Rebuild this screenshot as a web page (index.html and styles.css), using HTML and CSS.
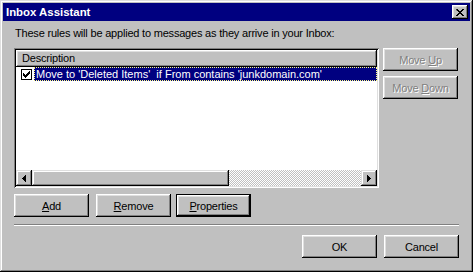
FILE: index.html
```html
<!DOCTYPE html>
<html>
<head>
<meta charset="utf-8">
<link rel="stylesheet" href="styles.css">
</head>
<body>
<div class="window">
  <div class="titlebar">
    <span class="title">Inbox Assistant</span>
    <span class="close"><svg width="8" height="7" viewBox="0 0 8 7"><path d="M0 0h2v1h1v1h2v-1h1v-1h2v1h-1v1h-1v1h-1v1h1v1h1v1h1v1h-2v-1h-1v-1h-2v1h-1v1h-2v-1h1v-1h1v-1h1v-1h-1v-1h-1z" fill="#000"/></svg></span>
  </div>
  <div class="content">
    <div class="label">These rules will be applied to messages as they arrive in your Inbox:</div>
    <div class="main">
      <div class="listbox">
        <div class="header"><span>Description</span></div>
        <div class="rows">
          <div class="row">
            <span class="check"><svg width="7" height="7" viewBox="0 0 7 7"><path d="M0 2h1v1h1v1h1v-1h1v-1h1v-1h1v-1h1v3h-1v1h-1v1h-1v1h-1v1h-1v-1h-1v-1h-1z" fill="#000"/></svg></span>
            <span class="sel"><span class="seltext">Move to 'Deleted Items'&nbsp; if From contains 'junkdomain.com'</span></span>
          </div>
        </div>
        <div class="hscroll">
          <span class="arrow"><svg width="4" height="7" viewBox="0 0 4 7"><path d="M4 0v7H3V6H2V5H1V4H0V3H1V2H2V1H3V0z" fill="#000"/></svg></span>
          <span class="thumb"></span>
          <span class="track"></span>
          <span class="arrow"><svg width="4" height="7" viewBox="0 0 4 7"><path d="M0 0v7H1V6H2V5H3V4H4V3H3V2H2V1H1V0z" fill="#000"/></svg></span>
        </div>
      </div>
      <div class="side">
        <div class="btn disabled"><span>Move <u>U</u>p</span></div>
        <div class="btn disabled"><span>Move <u>D</u>own</span></div>
      </div>
    </div>
    <div class="actions">
      <div class="btn"><span><u>A</u>dd</span></div>
      <div class="btn btn-remove"><span><u>R</u>emove</span></div>
      <div class="btn default"><span><u>P</u>roperties</span></div>
    </div>
    <div class="sep"></div>
    <div class="footer">
      <div class="btn"><span>OK</span></div>
      <div class="btn"><span>Cancel</span></div>
    </div>
  </div>
</div>
</body>
</html>
```
FILE: styles.css
```css
html,body{margin:0;padding:0;background:#c0c0c0;}
body{font-family:"Liberation Sans",Arial,sans-serif;font-size:11px;color:#000;letter-spacing:-0.2px;}
.window{width:473px;height:272px;box-sizing:border-box;padding:3px;background:#c0c0c0;
  box-shadow:inset -1px -1px #000,inset 1px 1px #dfdfdf,inset -2px -2px #808080,inset 2px 2px #fff;
  display:flex;flex-direction:column;}
.titlebar{height:18px;background:#000080;display:flex;align-items:center;justify-content:space-between;padding:0 2px 0 3px;}
.title{color:#fff;font-weight:bold;font-size:11.4px;line-height:18px;letter-spacing:0;}
.close{width:16px;height:14px;box-sizing:border-box;background:#c0c0c0;display:flex;align-items:center;justify-content:center;
  box-shadow:inset -1px -1px #000,inset 1px 1px #fff,inset -2px -2px #808080,inset 2px 2px #dfdfdf;}
.close svg{display:block;margin-left:-1px;}
.content{padding:0 11px;display:flex;flex-direction:column;}
.label{margin-top:6px;height:13px;line-height:13px;padding-left:1px;}
.main{margin-top:8px;display:flex;height:140px;}
.listbox{width:365px;height:140px;box-sizing:border-box;padding:2px;background:#fff;display:flex;flex-direction:column;
  box-shadow:inset 1px 1px #808080,inset -1px -1px #fff,inset 2px 2px #000,inset -2px -2px #dfdfdf;}
.header{height:17px;box-sizing:border-box;background:#c0c0c0;line-height:16px;padding-left:6px;
  box-shadow:inset -1px -1px #000,inset 1px 1px #fff,inset -2px -2px #808080,inset 2px 2px #dfdfdf;}
.rows{flex:1;}
.row{display:flex;align-items:center;height:14px;}
.check{width:11px;height:11px;box-sizing:border-box;margin-left:5px;background:#fff;border:1px solid #000;display:flex;align-items:center;justify-content:center;}
.check svg{display:block;}
.sel{flex:1;margin-left:2px;height:14px;background:#000080;box-sizing:border-box;border:1px dotted #ffff80;display:flex;align-items:center;}
.seltext{color:#fff;line-height:12px;padding-left:1px;white-space:nowrap;letter-spacing:0;}
.hscroll{height:16px;display:flex;}
.arrow{width:16px;height:16px;box-sizing:border-box;background:#c0c0c0;display:flex;align-items:center;justify-content:center;
  box-shadow:inset -1px -1px #000,inset 1px 1px #dfdfdf,inset -2px -2px #808080,inset 2px 2px #fff;}
.arrow svg{display:block;}
.thumb{width:197px;height:16px;box-sizing:border-box;background:#c0c0c0;
  box-shadow:inset -1px -1px #000,inset 1px 1px #dfdfdf,inset -2px -2px #808080,inset 2px 2px #fff;}
.track{flex:1;background-color:#c0c0c0;background-image:conic-gradient(#fff 25%,#c0c0c0 0 50%,#fff 0 75%,#c0c0c0 0);background-size:2px 2px;}
.side{margin-left:4px;display:flex;flex-direction:column;gap:5px;}
.btn{width:75px;height:23px;box-sizing:border-box;background:#c0c0c0;display:flex;align-items:center;justify-content:center;
  box-shadow:inset -1px -1px #000,inset 1px 1px #fff,inset -2px -2px #808080,inset 2px 2px #dfdfdf;}
.btn.disabled{color:#808080;text-shadow:1px 1px 0 #fff;}
.actions{margin-top:6px;display:flex;}
.btn-remove{margin-left:7px;}
.btn.default{margin-left:5px;border:1px solid #000;}
.sep{margin-top:7px;height:2px;box-sizing:border-box;border-top:1px solid #808080;border-bottom:1px solid #fff;}
.footer{margin-top:9px;display:flex;justify-content:flex-end;gap:7px;}
```
